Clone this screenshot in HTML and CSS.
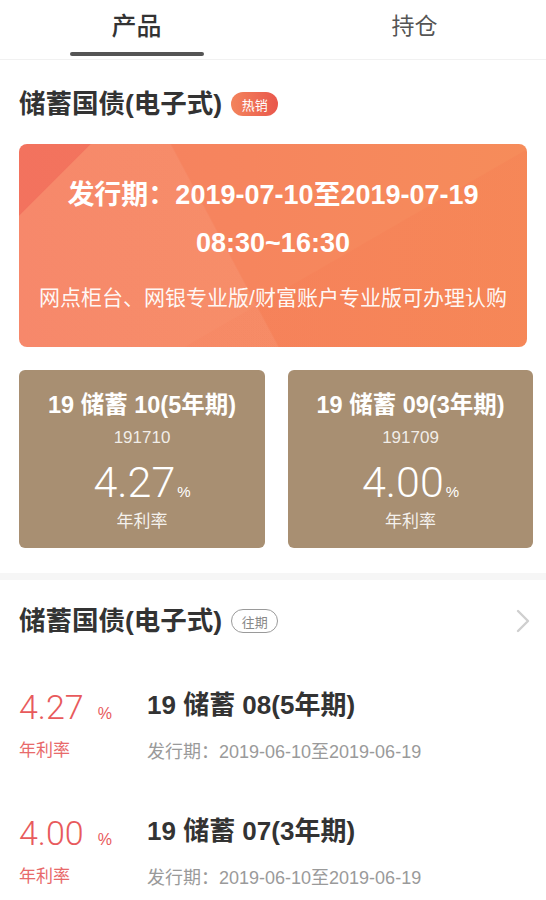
FILE: index.html
```html
<!DOCTYPE html>
<html lang="zh-CN">
<head>
<meta charset="utf-8">
<title>储蓄国债</title>
<link rel="stylesheet" href="styles.css">
</head>
<body>
<div class="tabs">
  <div class="tab active"><span class="tab-text">产品</span></div>
  <div class="tab"><span class="tab-text">持仓</span></div>
</div>

<div class="sec-head">
  <h2 class="sec-title">储蓄国债(电子式)</h2>
  <span class="badge hot">热销</span>
</div>

<div class="banner">
  <div class="banner-line big">发行期：2019-07-10至2019-07-19</div>
  <div class="banner-line big second">08:30~16:30</div>
  <div class="banner-line small">网点柜台、网银专业版/财富账户专业版可办理认购</div>
</div>

<div class="cards">
  <div class="card">
    <div class="card-title">19 储蓄 10(5年期)</div>
    <div class="card-code">191710</div>
    <div class="card-rate"><span class="num">4.27</span><span class="pct">%</span></div>
    <div class="card-label">年利率</div>
  </div>
  <div class="card">
    <div class="card-title">19 储蓄 09(3年期)</div>
    <div class="card-code">191709</div>
    <div class="card-rate"><span class="num">4.00</span><span class="pct">%</span></div>
    <div class="card-label">年利率</div>
  </div>
</div>

<div class="band"></div>

<div class="sec-head past">
  <h2 class="sec-title">储蓄国债(电子式)</h2>
  <span class="badge outline">往期</span>
  <svg class="chev" width="14" height="24" viewBox="0 0 14 24"><polyline points="2,2 12,12 2,22" fill="none" stroke="#cfcfcf" stroke-width="2.4" stroke-linecap="round" stroke-linejoin="round"/></svg>
</div>

<div class="row">
  <div class="rate-col">
    <div class="rate"><span class="num">4.27</span><span class="pct">%</span></div>
    <div class="rate-label">年利率</div>
  </div>
  <div class="info-col">
    <div class="info-title">19 储蓄 08(5年期)</div>
    <div class="info-date">发行期：2019-06-10至2019-06-19</div>
  </div>
</div>

<div class="row">
  <div class="rate-col">
    <div class="rate"><span class="num">4.00</span><span class="pct">%</span></div>
    <div class="rate-label">年利率</div>
  </div>
  <div class="info-col">
    <div class="info-title">19 储蓄 07(3年期)</div>
    <div class="info-date">发行期：2019-06-10至2019-06-19</div>
  </div>
</div>
</body>
</html>
```

FILE: styles.css
```css
* { box-sizing: border-box; }
html, body {
  margin: 0;
  padding: 0;
  background: #ffffff;
  font-family: "Liberation Sans", "Noto Sans CJK SC", sans-serif;
  color: #333333;
}

.tabs {
  display: grid;
  grid-template-columns: 1fr 1fr;
  height: 60px;
  border-bottom: 1px solid #f1f1f1;
}
.tab {
  display: flex;
  flex-direction: column;
  align-items: center;
  padding-top: 10px;
}
.tab + .tab { padding-left: 10px; }
.tab-text {
  font-size: 23px;
  line-height: 32px;
  height: 32px;
  color: #555555;
}
.tab.active .tab-text {
  font-size: 25px;
  font-weight: 500;
  color: #333333;
}
.tab.active::after {
  content: "";
  display: block;
  width: 134px;
  height: 4px;
  border-radius: 2px;
  background: #555555;
  margin-top: 10px;
}

.sec-head {
  display: flex;
  align-items: center;
  padding: 26px 16px 0 19px;
  height: 62px;
}
.sec-title {
  margin: 0;
  font-size: 26.5px;
  line-height: 36px;
  height: 36px;
  font-weight: 700;
  color: #333333;
}
.badge {
  margin-left: 9px;
  width: 47px;
  height: 24px;
  border-radius: 12px;
  display: flex;
  align-items: center;
  justify-content: center;
  font-size: 13px;
}
.badge.hot {
  color: #fff;
  background: linear-gradient(90deg, #f3845c, #e9574c);
}
.badge.outline {
  color: #888;
  border: 1.5px solid #9a9a9a;
}
.chev { margin-left: auto; }

.banner {
  margin: 22px 19px 0;
  height: 203px;
  border-radius: 8px;
  color: #fff;
  text-align: center;
  padding-top: 31px;
  background:
    linear-gradient(135deg, rgba(238, 88, 78, 0.45) 0 10%, rgba(0,0,0,0) 10.2%),
    linear-gradient(62deg, rgba(255, 255, 255, 0.07) 0 42%, rgba(0,0,0,0) 42.3%),
    linear-gradient(150deg, rgba(0,0,0,0) 0 60%, rgba(245, 120, 80, 0.25) 60.3%),
    linear-gradient(90deg, #f67f60 0%, #f6875d 60%, #f68c5a 100%);
}
.banner-line.big {
  font-size: 27px;
  line-height: 40px;
  height: 40px;
  font-weight: 700;
}
.banner-line.second { margin-top: 8px; }
.banner-line.small {
  margin-top: 20px;
  font-size: 21px;
  line-height: 30px;
  height: 30px;
  color: rgba(255, 255, 255, 0.95);
}

.cards {
  margin-top: 23px;
  padding: 0 13px 0 19px;
  display: grid;
  grid-template-columns: 246px 245px;
  gap: 23px;
}
.card {
  height: 178px;
  border-radius: 6px;
  background: #a88f72;
  color: #fff;
  text-align: center;
  padding-top: 20px;
}
.card-title {
  font-size: 23.5px;
  line-height: 30px;
  height: 30px;
  font-weight: 700;
}
.card-code {
  margin-top: 7px;
  font-size: 17px;
  line-height: 22px;
  height: 22px;
  color: rgba(255, 255, 255, 0.85);
}
.card-rate {
  margin-top: 9px;
  line-height: 48px;
  height: 48px;
}
.card-rate .num {
  font-size: 43px;
  font-family: "Roboto", "Liberation Sans", sans-serif;
  font-weight: 300;
}
.card-rate .pct {
  font-size: 15px;
  margin-left: 2px;
}
.card-label {
  margin-top: 4px;
  font-size: 17px;
  line-height: 24px;
  height: 24px;
  color: rgba(255, 255, 255, 0.88);
}

.band {
  margin-top: 25px;
  height: 7px;
  background: #f6f6f6;
}

.sec-head.past {
  padding-top: 23px;
  height: 59px;
}

.row {
  display: flex;
  padding: 48px 19px 0 19px;
}
.rate-col { width: 128px; }
.rate {
  line-height: 40px;
  height: 40px;
  color: #e85a5c;
}
.rate .num {
  font-size: 34px;
  font-family: "Roboto", "Liberation Sans", sans-serif;
  font-weight: 300;
}
.rate .pct {
  font-size: 16px;
  margin-left: 14px;
}
.rate-label {
  margin-top: 11px;
  font-size: 17px;
  line-height: 26px;
  height: 26px;
  color: #e86a6a;
}
.info-title {
  font-size: 26px;
  line-height: 36px;
  height: 36px;
  font-weight: 700;
  color: #333;
}
.info-date {
  margin-top: 16px;
  font-size: 18px;
  line-height: 26px;
  height: 26px;
  color: #9a9a9a;
}
```
